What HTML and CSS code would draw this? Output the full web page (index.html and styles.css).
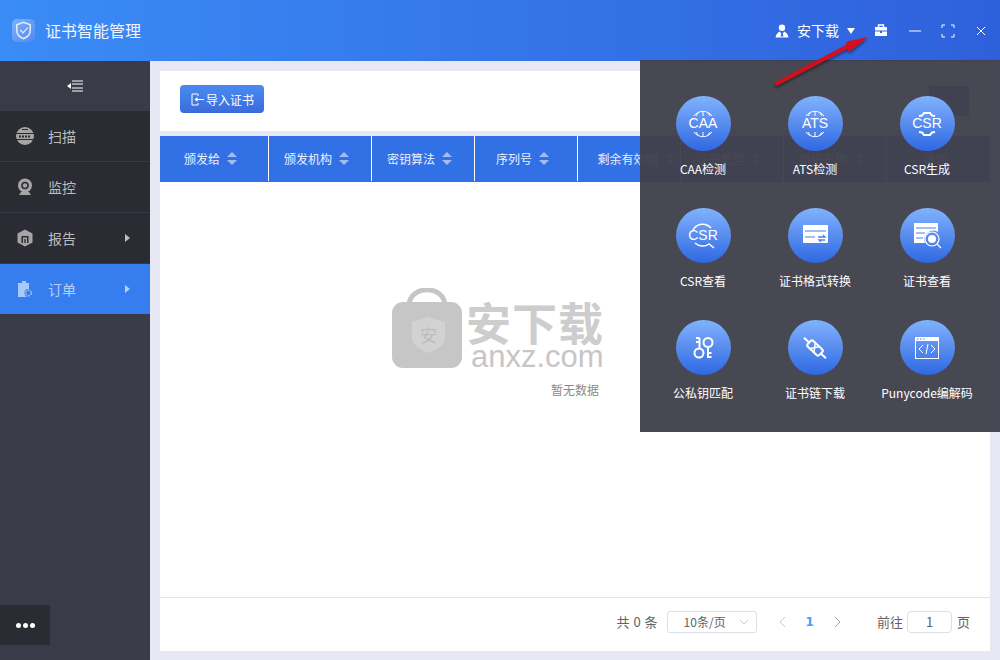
FILE: index.html
```html
<!DOCTYPE html>
<html lang="zh">
<head>
<meta charset="utf-8">
<title>证书智能管理</title>
<link rel="stylesheet" href="styles.css">
</head>
<body>
<div class="app">
  <header class="topbar">
    <div class="brand">
      <span class="logo"><svg viewBox="0 0 24 24" width="23" height="23"><path d="M12 3.500 19 6v6c0 4.400-3 7-7 8.500C8 19 5 16.400 5 12V6z" fill="none" stroke="#dfeaff" stroke-width="1.700"/><path d="m8.500 11.500 3 3 5-5.500" fill="none" stroke="#dfeaff" stroke-width="1.400"/></svg></span>
      <span class="brand-name">证书智能管理</span>
    </div>
    <div class="top-actions">
      <svg class="user-ic" viewBox="0 0 14 14" width="14" height="14"><circle cx="7" cy="3.800" r="3.200" fill="#fff"/><path d="M0.500 13.500C1 10 3 8 5 7.500L6.300 10 5.500 12.500H8.500L7.700 10 9 7.500c2 .5 4 2.500 4.500 6z" fill="#fff"/></svg>
      <span class="user-name">安下载</span>
      <span class="caret"></span>
      <svg class="case-ic" viewBox="0 0 14 13" width="14" height="13"><path d="M4.500 3V1h5v2" fill="none" stroke="#fff" stroke-width="1.400"/><path d="M1 3h12v3.500H1zM1 7.500h5V9h2V7.500h5V12H1z" fill="#fff"/></svg>
      <svg class="win-ic" viewBox="0 0 14 14" width="14" height="14"><path d="M1 7h12" stroke="#fff" stroke-width="1" fill="none"/></svg>
      <svg class="win-ic" viewBox="0 0 14 14" width="14" height="14"><path d="M1 4V1h3M10 1h3v3M13 10v3h-3M4 13H1v-3" stroke="#fff" stroke-width="1" fill="none"/></svg>
      <svg class="win-ic" viewBox="0 0 14 14" width="14" height="14"><path d="m3 3 8 8M11 3l-8 8" stroke="#fff" stroke-width="1" fill="none"/></svg>
    </div>
  </header>

  <div class="body">
    <aside class="sidebar">
      <div class="toggle"><svg viewBox="0 0 16 12" width="16" height="12"><path d="M5 1h11M5 4h11M5 8h11M5 11h11" stroke="#fff" stroke-width="1" fill="none"/><path d="M0 6l4-3v6z" fill="#fff"/></svg></div>
      <nav class="menu">
        <div class="menu-item">
          <svg class="menu-ic" viewBox="0 0 18 18" width="18" height="18"><circle cx="9" cy="9" r="9" fill="#a5a5a5"/><path d="M0 6.500h18M0 12.500h18" stroke="#2b2b33" stroke-width="1"/><path d="M3 9.500h12" stroke="#2b2b33" stroke-width="2" stroke-dasharray="2 1"/><path d="M6 2.500h6" stroke="#2b2b33" stroke-width="1"/></svg>
          <span>扫描</span>
        </div>
        <div class="menu-item">
          <svg class="menu-ic" viewBox="0 0 18 18" width="18" height="18"><circle cx="9" cy="7.500" r="7" fill="#a5a5a5"/><circle cx="9" cy="7.500" r="3.800" fill="#2b2b33"/><circle cx="9" cy="7.500" r="2.200" fill="#a5a5a5"/><path d="M3 17h12l-2-3H5z" fill="#a5a5a5"/></svg>
          <span>监控</span>
        </div>
        <div class="menu-item">
          <svg class="menu-ic" viewBox="0 0 18 18" width="18" height="18"><path d="M9 .5 16.500 4.500v9L9 17.500 1.500 13.500v-9z" fill="#a5a5a5"/><path d="M5.500 7h7v7h-1.500V8.500H7V14H5.500zM8.300 10h1.400v4H8.300z" fill="#2b2b33"/></svg>
          <span>报告</span>
          <i class="menu-arrow"></i>
        </div>
        <div class="menu-item active">
          <svg class="menu-ic" viewBox="0 0 18 18" width="18" height="18"><path d="M6 1h4v2h3v14H2V3h4z" fill="#a9c8fb"/><circle cx="12.500" cy="13" r="4" fill="#367ef0"/><circle cx="12.500" cy="13" r="2.800" fill="none" stroke="#a9c8fb" stroke-width="1.200" stroke-dasharray="2 1"/></svg>
          <span>订单</span>
          <i class="menu-arrow"></i>
        </div>
      </nav>
      <div class="more"><span></span><span></span><span></span></div>
    </aside>

    <main class="main">
      <section class="card">
        <div class="toolbar">
          <button class="import-btn"><svg viewBox="0 0 13 13" width="13" height="13"><path d="M7 3V1H1v11h6v-2" fill="none" stroke="#fff" stroke-width="1"/><path d="M3.500 6.500 6.500 4v5zM6 6h7v1H6z" fill="#fff"/></svg>导入证书</button>
          <div class="search"><span class="search-input"></span><span class="search-btn"></span></div>
        </div>
        <div class="thead">
          <div class="th">颁发给<i class="sort"></i></div>
          <div class="th">颁发机构<i class="sort"></i></div>
          <div class="th">密钥算法<i class="sort"></i></div>
          <div class="th">序列号<i class="sort"></i></div>
          <div class="th wide">剩余有效期<i class="sort"></i></div>
          <div class="th">证书类型<i class="sort"></i></div>
          <div class="th">组织名称<i class="sort"></i></div>
          <div class="th last">操作</div>
        </div>
        <div class="empty">
          <div class="watermark">
            <svg class="wm-bag" viewBox="0 0 70 80" width="70" height="80"><path d="M17 16C20 -3 50 -3 53 16" fill="none" stroke="#c6c6c6" stroke-width="5"/><rect x="0" y="14" width="70" height="66" rx="11" fill="#c6c6c6"/><path d="M36.500 29 53 34v15c0 8-7 12-16.500 16C27 61 20 57 20 49V34z" fill="#d2d2d2"/></svg>
            <div class="wm-text"><span class="wm-cn">安下载</span><span class="wm-en">anxz.com</span></div>
            <span class="wm-mark">安</span>
          </div>
          <p class="empty-text">暂无数据</p>
        </div>
        <footer class="pager">
          <span class="total">共 0 条</span>
          <span class="size">10条/页<svg viewBox="0 0 10 6" width="10" height="6"><path d="m1 1 4 4 4-4" fill="none" stroke="#c4c4c4"/></svg></span>
          <span class="pages">
            <svg viewBox="0 0 7 12" width="7" height="12"><path d="M6 1 1 6l5 5" fill="none" stroke="#c8c8c8"/></svg>
            <b class="page-cur">1</b>
            <svg viewBox="0 0 7 12" width="7" height="12"><path d="m1 1 5 5-5 5" fill="none" stroke="#a8a8a8"/></svg>
          </span>
          <span class="jump">前往<span class="jump-input">1</span>页</span>
        </footer>
      </section>
    </main>
  </div>

  <div class="tool-panel">
    <div class="tool">
      <span class="tool-ic"><svg viewBox="0 0 32 32" width="32" height="32"><path d="M7 8a11 11 0 0 1 18 0M7 24a11 11 0 0 0 18 0M16 4v4M16 24v4M11 5l-2 3M21 5l2 3M11 27l-2-3M21 27l2-3" fill="none" stroke="#fff"/></svg><em class="ic-word">CAA</em></span>
      <span class="tool-label">CAA检测</span>
    </div>
    <div class="tool">
      <span class="tool-ic"><svg viewBox="0 0 32 32" width="32" height="32"><path d="M7 8a11 11 0 0 1 18 0M7 24a11 11 0 0 0 18 0M16 4v4M16 24v4M11 5l-2 3M21 5l2 3M11 27l-2-3M21 27l2-3" fill="none" stroke="#fff"/></svg><em class="ic-word">ATS</em></span>
      <span class="tool-label">ATS检测</span>
    </div>
    <div class="tool">
      <span class="tool-ic"><svg viewBox="0 0 32 32" width="32" height="32"><path d="M8 8 11 7.500 13 5h6l2 2.500 3 .5M8 24l3 .5 2 2.500h6l2-2.500 3-.5" fill="none" stroke="#fff" stroke-width="2"/></svg><em class="ic-word">CSR</em></span>
      <span class="tool-label">CSR生成</span>
    </div>
    <div class="tool">
      <span class="tool-ic"><svg viewBox="0 0 32 32" width="32" height="32"><path d="M6 10a11 11 0 0 1 18-2M8 23a11 11 0 0 0 14 1l5 4" fill="none" stroke="#fff" stroke-width="1.500"/></svg><em class="ic-word">CSR</em></span>
      <span class="tool-label">CSR查看</span>
    </div>
    <div class="tool">
      <span class="tool-ic"><svg viewBox="0 0 32 32" width="32" height="32"><rect x="4" y="5" width="25" height="18" rx="1" fill="#fff"/><path d="M6 11h21M6 17h10" stroke="#4a80ea" stroke-width="1"/><path d="M19 17h7l-2-2M26 20h-6l2 2" stroke="#4a80ea" stroke-width="1.300" fill="none"/></svg></span>
      <span class="tool-label">证书格式转换</span>
    </div>
    <div class="tool">
      <span class="tool-ic"><svg viewBox="0 0 32 32" width="32" height="32"><path d="M3 3h24v9a9 9 0 0 0-13 11H3z" fill="#fff"/><path d="M5 8h20M5 13h9M5 18h7" stroke="#4a80ea"/><circle cx="21" cy="19" r="7" fill="none" stroke="#fff" stroke-width="1.200"/><circle cx="21" cy="19" r="4" fill="#fff"/><path d="m26 24 4 4" stroke="#fff" stroke-width="1.300"/></svg></span>
      <span class="tool-label">证书查看</span>
    </div>
    <div class="tool">
      <span class="tool-ic"><svg viewBox="0 0 32 32" width="32" height="32"><g fill="none" stroke="#fff" stroke-width="2"><circle cx="12" cy="21" r="4.500"/><path d="M12.500 16.500V6M12.500 6H9M12.500 10H9"/><circle cx="21" cy="10.500" r="4.500"/><path d="M21 15v11M21 21h3.500M21 25h3.500"/></g></svg></span>
      <span class="tool-label">公私钥匹配</span>
    </div>
    <div class="tool">
      <span class="tool-ic"><svg viewBox="0 0 32 32" width="32" height="32"><g transform="rotate(43 16 16)" fill="none" stroke="#fff" stroke-width="2"><path d="M1 16h7M24 16h7"/><rect x="8" y="12" width="16" height="8" rx="2"/><path d="M13 12.500l5 7M18 12.500l-5 7" stroke-width="1.500"/></g></svg></span>
      <span class="tool-label">证书链下载</span>
    </div>
    <div class="tool">
      <span class="tool-ic"><svg viewBox="0 0 32 32" width="32" height="32"><rect x="4.500" y="5.500" width="23" height="21" fill="none" stroke="#fff"/><path d="M4 5h24v4H4z" fill="#fff"/><path d="M6 7h1.500M9 7h1.500M12 7h1.500" stroke="#4a80ea"/><path d="M12 13l-4 4 4 4M20 13l4 4-4 4M17 12l-2 10" fill="none" stroke="#fff"/></svg></span>
      <span class="tool-label">Punycode编解码</span>
    </div>
  </div>

  <svg class="red-arrow" viewBox="0 0 110 60" width="110" height="60"><defs><filter id="s"><feDropShadow dx="0" dy="2" stdDeviation="1.500" flood-color="#000" flood-opacity=".5"/></filter></defs><path d="M4 47 76 9 77 5.500 98 1 79 16 78 12.500 6 50z" fill="#d8101c" filter="url(#s)"/></svg>
</div>
</body>
</html>
```
FILE: styles.css
```css
* { box-sizing: border-box; }
html, body { margin: 0; height: 100%; }
body {
  font-family: "Noto Sans CJK SC", "Liberation Sans", sans-serif;
  font-size: 12px;
  overflow: hidden;
}
.app { position: relative; width: 1000px; height: 660px; display: flex; flex-direction: column; background: #e8e8f4; }

.topbar {
  height: 61px;
  flex: none;
  display: flex;
  align-items: center;
  justify-content: space-between;
  background: linear-gradient(90deg, #3a8cf6 0%, #2f60dc 100%);
  color: #fff;
  padding: 0 12px;
}
.brand { display: flex; align-items: center; gap: 10px; }
.logo {
  width: 23px; height: 23px; border-radius: 5px;
  background: linear-gradient(135deg, #7fb0fa, #4f8af2);
  display: flex;
}
.brand-name { font-size: 16px; color: #f0f5ff; margin-bottom: 2px; }
.top-actions { display: flex; align-items: center; }
.user-ic { margin-right: 8px; }
.user-name { font-size: 14px; margin-right: 8px; margin-bottom: 2px; }
.caret { width: 0; height: 0; border: 4.500px solid transparent; border-top: 6px solid #fff; border-bottom: 0; margin-right: 19px; }
.case-ic { margin-right: 20px; }
.win-ic { margin-right: 19px; }
.win-ic:last-child { margin-right: 0; }

.body { flex: 1; display: flex; min-height: 0; }
.sidebar { width: 150px; flex: none; display: flex; flex-direction: column; background: #3a3a48; }
.toggle { height: 50px; display: flex; align-items: center; justify-content: center; }
.menu { flex: 1; }
.menu-item {
  position: relative;
  height: 51px;
  display: flex;
  align-items: center;
  padding-left: 16px;
  gap: 14px;
  font-size: 14px;
  color: #bdbdbd;
  background: #2b2b33;
  border-bottom: 1px solid #3a3a46;
}
.menu-item.active { background: #367ef0; color: #b5d0fb; border-bottom: 0; height: 50px; }
.menu-arrow {
  position: absolute; right: 20px; top: 50%;
  margin-top: -4px;
  width: 0; height: 0;
  border: 4px solid transparent;
  border-left: 5px solid currentColor;
  border-right: 0;
}
.more {
  width: 50px; height: 40px; margin-bottom: 15px;
  background: #2b2b33;
  display: flex; align-items: center; justify-content: center; gap: 2px;
}
.more span { width: 5px; height: 5px; border-radius: 50%; background: #fff; }

.main { flex: 1; padding: 10px 10px 9px; min-width: 0; }
.card { height: 100%; display: flex; flex-direction: column; background: #e8e8f4; }
.toolbar {
  height: 60px; flex: none;
  background: #fff;
  display: flex; align-items: flex-start; justify-content: space-between;
  padding: 14px 21px 0 20px;
  margin-bottom: 5px;
}
.import-btn {
  width: 84px; height: 28px;
  border: 0; border-radius: 4px;
  background: linear-gradient(180deg, #4a8bf0, #3a6bdc);
  color: #fff;
  font: inherit;
  display: flex; align-items: center; justify-content: center; gap: 2px;
  padding: 0 0 0 1px;
}
.search { display: flex; margin-top: 1px; }
.search-input { width: 259px; height: 30px; border: 1px solid #dcdcdc; }
.search-btn { width: 40px; height: 30px; background: #3271e4; }

.thead { height: 46px; flex: none; display: grid; grid-template-columns: 109px repeat(7, 103px); background: #3270e6; }
.th {
  display: flex; align-items: center; justify-content: center; gap: 7px;
  color: #eaf1ff;
  border-right: 1px solid #fff;
  height: 45px;
  padding: 0 6px 1px 0;
}
.th.wide { padding: 0 0 1px 15px; }
.th.last { border-right: 0; }
.sort { position: relative; width: 11px; height: 13px; flex: none; }
.sort::before, .sort::after {
  content: ""; position: absolute; left: 0;
  border-left: 5.500px solid transparent; border-right: 5.500px solid transparent;
}
.sort::before { top: 0; border-bottom: 5.500px solid #a3bbee; }
.sort::after { bottom: 0; border-top: 5.500px solid #a3bbee; }

.empty { position: relative; flex: 1; background: #fff; display: flex; justify-content: center; }
.empty-text { margin: 200px 0 0; color: #8a8a8a; line-height: 16px; }
.watermark { position: absolute; left: 232px; top: 106px; display: flex; }
.wm-bag { flex: none; }
.wm-text { display: flex; flex-direction: column; margin: 11px 0 0 4px; }
.wm-cn { font-size: 45px; line-height: 45px; font-weight: 700; color: #cdcdcd; letter-spacing: 1px; white-space: nowrap; }
.wm-en { font-family: "Liberation Sans", sans-serif; font-size: 31px; line-height: 25px; color: #c6c6c6; padding-left: 5px; white-space: nowrap; }
.wm-mark { position: absolute; left: 28px; top: 37px; font-size: 17px; line-height: 20px; color: #bcbcbc; }

.pager {
  height: 54px; flex: none;
  background: #fff;
  border-top: 1px solid #e4e4e4;
  display: flex; align-items: center; justify-content: flex-end;
  padding: 0 20px 6px 0;
  color: #606266;
  font-size: 13px;
}
.total { margin-right: 9px; white-space: nowrap; word-spacing: 1px; }
.size {
  width: 90px; height: 22px; border: 1px solid #dcdfe6; border-radius: 3px;
  display: flex; align-items: center; justify-content: space-between;
  padding: 0 7px 0 16px;
  font-size: 12px;
}
.pages { display: flex; align-items: center; margin-left: 22px; }
.page-cur { color: #409eff; margin: 0 20px; font-family: "DejaVu Sans", sans-serif; font-size: 12px; }
.jump { display: flex; align-items: center; margin-left: 36px; white-space: nowrap; }
.jump-input {
  width: 45px; height: 22px; margin: 0 5px 0 4px;
  border: 1px solid #dcdfe6; border-radius: 4px;
  text-align: center; line-height: 20px;
}

.tool-panel {
  position: absolute; left: 640px; top: 60px;
  width: 360px; height: 372px;
  background: rgba(65, 65, 76, .96);
  display: grid;
  grid-template-columns: repeat(3, 112px);
  grid-auto-rows: 112px;
  padding: 36px 0 0 7px;
}
.tool { display: flex; flex-direction: column; align-items: center; color: #fff; }
.tool-ic {
  position: relative;
  width: 55px; height: 55px; border-radius: 50%;
  background: linear-gradient(180deg, #82b2fc 0%, #2f68e2 100%);
  display: flex; align-items: center; justify-content: center;
}
.ic-word {
  position: absolute; left: 0; right: 0; top: 18px;
  text-align: center;
  font: 400 14px/18px "Liberation Sans", sans-serif;
  color: #fff;
}
.tool-label { margin-top: 9px; line-height: 18px; white-space: nowrap; }

.red-arrow { position: absolute; left: 770px; top: 36px; }
```
